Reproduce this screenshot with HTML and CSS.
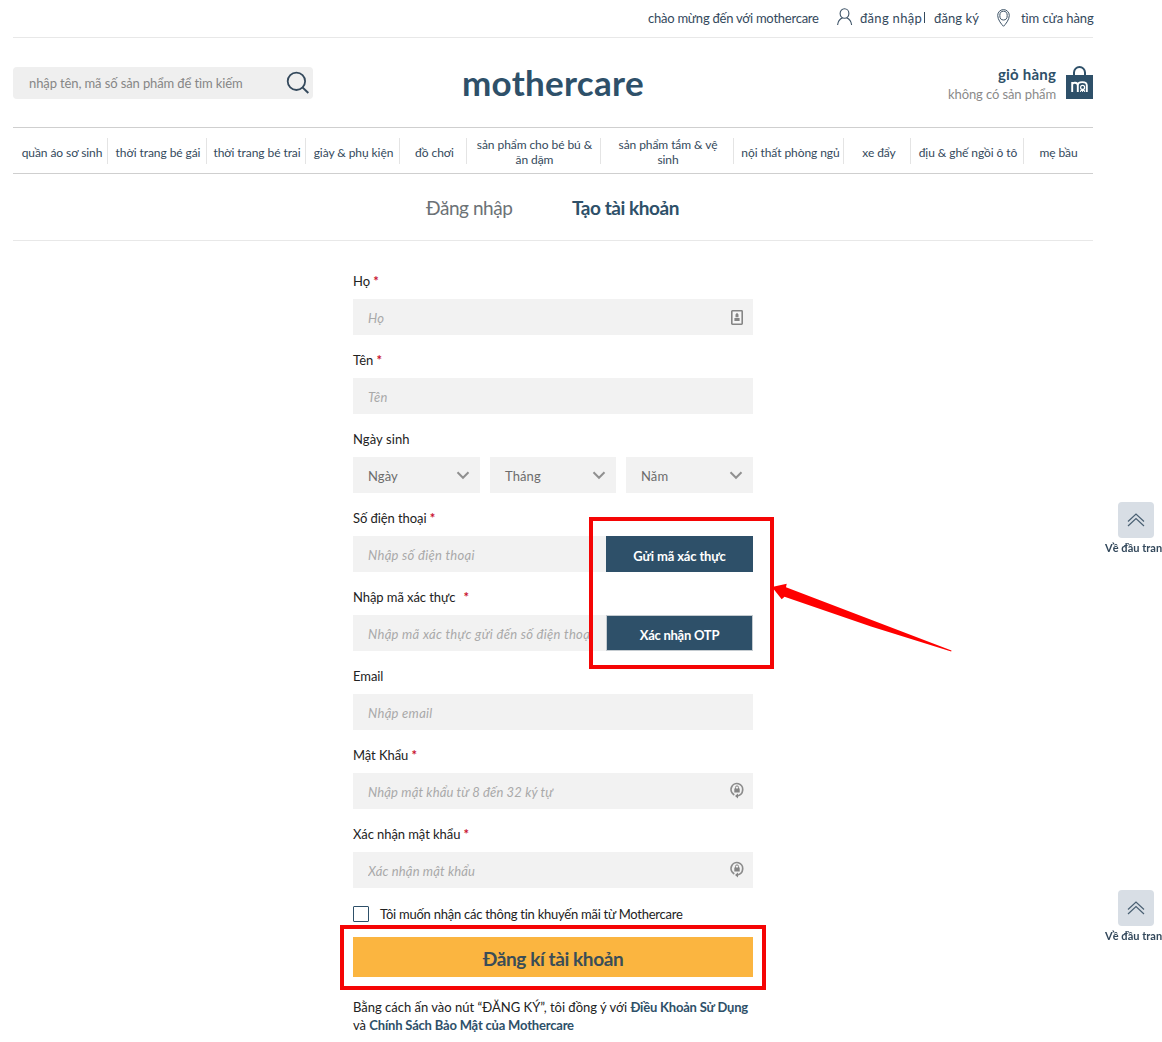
FILE: index.html
```
<!DOCTYPE html>
<html lang="vi">
<head>
    <meta charset="UTF-8">
    <meta name="viewport" content="width=device-width, initial-scale=1.0">
    <title>Tạo tài khoản | mothercare</title>
    <link rel="stylesheet" href="styles.css">
</head>
<body>
    <div class="container">
        <div class="top-bar">
            <span class="welcome">chào mừng đến với mothercare</span>
            <svg class="icon-user" width="16" height="18" viewBox="0 0 16 18" fill="none" stroke="#3c5266" stroke-width="1.1">
                <ellipse cx="7.500" cy="5.500" rx="4.400" ry="4.700"/>
                <path d="M.6 17c.3-3.600 2.200-6 4.900-7.300M14.600 17c-.3-3.600-2.200-6-4.900-7.300"/>
            </svg>
            <a class="login-link" href="#">đăng nhập</a>
            <span class="divider"></span>
            <a class="register-link" href="#">đăng ký</a>
            <svg class="icon-pin" width="13" height="18" viewBox="0 0 13 18" fill="none" stroke="#3c5266">
                <path d="M6.5 17.3C4.600 15.500.7 10.700.7 6.500a5.800 5.900 0 0 1 11.600 0c0 4.200-3.900 9-5.800 10.800z"/>
                <ellipse cx="6.500" cy="6.600" rx="3.700" ry="4.400"/>
            </svg>
            <a class="store-link" href="#">tìm cửa hàng</a>
        </div>

        <header class="header">
            <form class="search">
                <input type="text" placeholder="nhập tên, mã số sản phẩm để tìm kiếm">
                <svg width="24" height="24" viewBox="0 0 24 24" fill="none" stroke="#34495c" stroke-width="1.8">
                    <circle cx="10.400" cy="10.300" r="8.700"/>
                    <path d="M16.500 16.400l5.800 5.600" stroke-width="2"/>
                </svg>
            </form>
            <a class="logo" href="#">mothercare</a>
            <div class="cart">
                <div class="cart-text">
                    <strong>giỏ hàng</strong>
                    <span>không có sản phẩm</span>
                </div>
                <svg width="27" height="33" viewBox="0 0 27 33" fill="none">
                    <path d="M8 10V6.500a5.500 5.500 0 0 1 11 0V10" stroke="#2e5069" stroke-width="2"/>
                    <path d="M0 9h27v24H0z" fill="#2e5069"/>
                    <path d="M6.200 26V16M6.200 19c0-3 5.600-3 5.600.5V26M11.800 19.500c0-4.500 9-4.500 9 0V26" stroke="#fff" stroke-width="1.900"/>
                    <circle cx="16.600" cy="21.400" r="2" stroke="#fff" stroke-width="1.200"/>
                    <path d="M14.600 26v-1.500h4V26M16.600 23.500V26" stroke="#fff"/>
                </svg>
            </div>
        </header>

        <nav class="nav">
            <a class="n1" href="#">quần áo sơ sinh</a>
            <a class="n2" href="#">thời trang bé gái</a>
            <a class="n3" href="#">thời trang bé trai</a>
            <a class="n4" href="#">giày &amp; phụ kiện</a>
            <a class="n5" href="#">đồ chơi</a>
            <a class="n6" href="#">sản phẩm cho bé bú &amp;<br>ăn dặm</a>
            <a class="n7" href="#">sản phẩm tắm &amp; vệ<br>sinh</a>
            <a class="n8" href="#">nội thất phòng ngủ</a>
            <a class="n9" href="#">xe đẩy</a>
            <a class="n10" href="#">địu &amp; ghế ngồi ô tô</a>
            <a class="n11" href="#">mẹ bầu</a>
        </nav>

        <div class="tabs">
            <a class="tab" href="#">Đăng nhập</a>
            <a class="tab active" href="#">Tạo tài khoản</a>
        </div>

        <form class="register">
            <div class="field">
                <label>Họ <i>*</i></label>
                <div class="control">
                    <input type="text" placeholder="Họ">
                    <svg class="field-icon" width="12" height="15" viewBox="0 0 12 15">
                        <rect x=".8" y=".8" width="10.400" height="13.400" rx=".6" fill="#f6f6f6" stroke="#858585" stroke-width="1.600"/>
                        <path d="M6 2.800l1.500 1.700v2.700h-3V4.500zM3.400 8h5.200v3H3.400z" fill="#858585"/>
                    </svg>
                </div>
            </div>
            <div class="field">
                <label>Tên <i>*</i></label>
                <div class="control"><input type="text" placeholder="Tên"></div>
            </div>
            <div class="field">
                <label class="label-dob">Ngày sinh</label>
                <div class="dob">
                    <div class="select">Ngày<svg width="14" height="9" viewBox="0 0 14 9"><path d="M1.500 1.300L7 6.800l5.500-5.500"/></svg></div>
                    <div class="select">Tháng<svg width="14" height="9" viewBox="0 0 14 9"><path d="M1.500 1.300L7 6.800l5.500-5.500"/></svg></div>
                    <div class="select">Năm<svg width="14" height="9" viewBox="0 0 14 9"><path d="M1.500 1.300L7 6.800l5.500-5.500"/></svg></div>
                </div>
            </div>
            <div class="field">
                <label>Số điện thoại <i>*</i></label>
                <div class="control with-button">
                    <input type="text" placeholder="Nhập số điện thoại">
                    <button class="btn-otp" type="button">Gửi mã xác thực</button>
                </div>
            </div>
            <div class="field">
                <label>Nhập mã xác thực <i class="far">*</i></label>
                <div class="control with-button">
                    <input type="text" placeholder="Nhập mã xác thực gửi đến số điện thoại">
                    <button class="btn-otp outlined" type="button">Xác nhận OTP</button>
                </div>
            </div>
            <div class="field">
                <label>Email</label>
                <div class="control"><input type="text" placeholder="Nhập email"></div>
            </div>
            <div class="field">
                <label>Mật Khẩu <i>*</i></label>
                <div class="control">
                    <input class="password" type="password" placeholder="Nhập mật khẩu từ 8 đến 32 ký tự">
                    <svg class="field-icon lock" width="14" height="17" viewBox="0 0 14 17" fill="none">
                        <path d="M4.300 12.900A5.800 6 0 1 1 12.600 8.500C12.400 11 11 13 7.500 14" stroke="#8c8c8c" stroke-width="1.700"/>
                        <path d="M4.300 6.500h5.400v4H4.300z" fill="#858585"/>
                        <path d="M5.500 7V5.400a1.500 1.500 0 0 1 3 0V7" stroke="#858585"/>
                        <path d="M8 11.500v5L5 14z" fill="#858585"/>
                    </svg>
                </div>
            </div>
            <div class="field">
                <label>Xác nhận mật khẩu <i>*</i></label>
                <div class="control">
                    <input class="password" type="password" placeholder="Xác nhận mật khẩu">
                    <svg class="field-icon lock" width="14" height="17" viewBox="0 0 14 17" fill="none">
                        <path d="M4.300 12.900A5.800 6 0 1 1 12.600 8.500C12.400 11 11 13 7.500 14" stroke="#8c8c8c" stroke-width="1.700"/>
                        <path d="M4.300 6.500h5.400v4H4.300z" fill="#858585"/>
                        <path d="M5.500 7V5.400a1.500 1.500 0 0 1 3 0V7" stroke="#858585"/>
                        <path d="M8 11.500v5L5 14z" fill="#858585"/>
                    </svg>
                </div>
            </div>

            <label class="newsletter">
                <span class="checkbox"></span>
                <span>Tôi muốn nhận các thông tin khuyến mãi từ Mothercare</span>
            </label>
            <button class="btn-submit" type="button">Đăng kí tài khoản</button>
            <p class="terms">Bằng cách ấn vào nút “ĐĂNG KÝ”, tôi đồng ý với <a href="#">Điều Khoản Sử Dụng</a><br>và <a href="#">Chính Sách Bảo Mật của Mothercare</a></p>
        </form>
    </div>

    <a class="to-top first" href="#">
        <span class="to-top-box"><svg width="18" height="14" viewBox="0 0 18 14"><path d="M1 8.500L9 1l8 7.500M1 13l8-7.500 8 7.500"/></svg></span>
        <span class="to-top-text">Về đầu trang</span>
    </a>
    <a class="to-top second" href="#">
        <span class="to-top-box"><svg width="18" height="14" viewBox="0 0 18 14"><path d="M1 8.500L9 1l8 7.500M1 13l8-7.500 8 7.500"/></svg></span>
        <span class="to-top-text">Về đầu trang</span>
    </a>

    <!-- red markers over the buttons -->
    <div class="marker marker-otp"></div>
    <div class="marker marker-submit"></div>
    <svg class="arrow" width="182" height="71" viewBox="0 0 182 71">
        <path d="M1 6l14.700-3.300-.7 3.600L180.500 69.600l-.3.800L100 45.500 13.500 15.700l-2.800 2.600z" fill="#f00"/>
    </svg>
</body>
</html>
```

FILE: styles.css
```
:root {
    --navy: #2e5069;
    --text: #34495c;
    --field: #f2f2f2;
    --line: #cfcfcf;
}

* {
    box-sizing: border-box;
    margin: 0;
    padding: 0;
}

body {
    font-family: Lato, "Open Sans", sans-serif;
    font-size: 13px;
    color: var(--text);
    background: #fff;
    height: 1042px;
    overflow: hidden;
}

a {
    color: inherit;
    text-decoration: none;
}

input,
button {
    font-family: inherit;
    border: none;
    outline: none;
}

.container {
    width: 1080px;
    margin-left: 13px;
}

/* top bar */
.top-bar {
    display: flex;
    align-items: center;
    height: 38px;
    padding: 0 0 2px 635px;
    border-bottom: 1px solid #e8e8e8;
    white-space: nowrap;
}

.top-bar > * {
    flex-shrink: 0;
}

.welcome {
    width: 189px;
    letter-spacing: -0.24px;
}

.icon-user {
    margin-bottom: 1px;
}

.login-link {
    width: 63px;
    margin-left: 7px;
    letter-spacing: 0.3px;
}

.divider {
    width: 1px;
    height: 11px;
    margin: 0 9px 0 1px;
    background: var(--text);
}

.register-link {
    width: 63px;
    letter-spacing: 0.1px;
}

.icon-pin {
    margin-right: 11px;
}

.store-link {
    width: 73px;
    letter-spacing: -0.1px;
}

/* header */
.header {
    display: flex;
    align-items: flex-start;
    height: 89px;
    padding-top: 29px;
}

.search {
    display: flex;
    align-items: center;
    width: 300px;
    height: 32px;
    padding: 0 3px 0 16px;
    background: #efefef;
    border-radius: 4px;
}

.search input {
    flex: 1;
    min-width: 0;
    background: none;
    font-size: 13px;
    letter-spacing: -0.11px;
}

.search input::placeholder {
    color: #868686;
}

.logo {
    width: 182px;
    margin-left: 149px;
    color: var(--navy);
    font-size: 35px;
    font-weight: 700;
    letter-spacing: 0.3px;
    line-height: 30px;
}

.cart {
    display: flex;
    margin-left: auto;
    gap: 10px;
    margin-top: -1px;
}

.cart-text {
    display: flex;
    flex-direction: column;
    align-items: flex-end;
    line-height: 19px;
    margin-top: -2px;
}

.cart-text strong {
    color: var(--navy);
    font-size: 15px;
    letter-spacing: 0.2px;
    line-height: 20px;
}

.cart-text span {
    color: #8a8a8a;
    letter-spacing: -0.1px;
    line-height: 21px;
}

/* navigation */
.nav {
    display: flex;
    align-items: center;
    height: 47px;
    border-top: 1px solid var(--line);
    border-bottom: 1px solid var(--line);
}

.nav a {
    display: flex;
    align-items: center;
    justify-content: center;
    height: 26px;
    padding-top: 3px;
    border-right: 1px solid #e4e4e4;
    font-size: 12px;
    letter-spacing: -0.07px;
    line-height: 15px;
    text-align: center;
    white-space: nowrap;
}

.nav .n1 { width: 95px; padding-left: 4px; }
.nav .n2 { width: 99px; padding-left: 2px; }
.nav .n3 { width: 99px; padding-left: 2px; }
.nav .n4 { width: 94px; padding-left: 2px; }
.nav .n5 { width: 67px; padding-left: 3px; }
.nav .n6 { width: 134px; padding-left: 2px; }
.nav .n7 { width: 133px; padding-left: 2px; }
.nav .n8 { width: 110px; padding-left: 4px; }
.nav .n9 { width: 67px; padding-left: 4px; }
.nav .n10 { width: 113px; padding-left: 2px; }
.nav .n11 { width: 69px; border-right: none; }

/* tabs */
.tabs {
    display: flex;
    gap: 60px;
    height: 67px;
    padding-left: 413px;
    border-bottom: 1px solid #e8e8e8;
    line-height: 68px;
}

.tab {
    width: 86px;
    color: #6c7276;
    font-size: 19px;
    letter-spacing: -0.45px;
    white-space: nowrap;
}

.tab.active {
    width: 108px;
    color: var(--navy);
    font-weight: 700;
}

/* register form */
.register {
    width: 400px;
    margin-left: 340px;
    padding-top: 30px;
}

.field {
    height: 79px;
}

.field label {
    display: block;
    height: 28px;
    color: #222;
    font-size: 13px;
    letter-spacing: -0.07px;
    line-height: 20px;
}

.field .label-dob {
    letter-spacing: 0.1px;
}

.field label i {
    color: #c8102e;
    font-style: normal;
    font-weight: 700;
}

.field label .far {
    margin-left: 5px;
}

.control {
    display: flex;
    align-items: center;
    height: 36px;
    padding: 0 0 0 15px;
    background: var(--field);
}

.control input {
    flex: 1;
    min-width: 0;
    height: 36px;
    padding-top: 2px;
    background: none;
    font-size: 13px;
    letter-spacing: 0.3px;
}

.control input.password {
    letter-spacing: 0.14px;
}

.control input::placeholder {
    color: #a9a9a9;
    font-style: italic;
}

.with-button {
    gap: 15px;
}

.field-icon {
    width: 14px;
    margin-right: 9px;
}

.field-icon.lock {
    margin-bottom: 2px;
}

.dob {
    display: grid;
    grid-template-columns: 127px 126px 127px;
    gap: 10px;
}

.select {
    display: flex;
    align-items: center;
    justify-content: space-between;
    height: 36px;
    padding: 2px 10px 0 15px;
    background: var(--field);
    color: #6c6c6c;
    letter-spacing: 0.1px;
}

.select svg {
    margin-bottom: 2px;
    fill: none;
    stroke: #909090;
    stroke-width: 2;
}

.btn-otp {
    width: 147px;
    height: 36px;
    padding-top: 4px;
    background: var(--navy);
    color: #fff;
    font-size: 13px;
    font-weight: 700;
    letter-spacing: -0.15px;
}

.btn-otp.outlined {
    border: 1px solid #c4cbd0;
    letter-spacing: -0.25px;
}

.newsletter {
    display: flex;
    align-items: center;
    gap: 11px;
    height: 16px;
    margin-top: 3px;
    color: #222;
    letter-spacing: -0.25px;
    white-space: nowrap;
}

.checkbox {
    width: 16px;
    height: 16px;
    border: 1px solid var(--navy);
    border-radius: 1px;
}

.btn-submit {
    display: block;
    width: 400px;
    height: 40px;
    margin-top: 15px;
    padding-top: 2px;
    background: #fbb540;
    color: #3a4d57;
    font-size: 19px;
    font-weight: 700;
    letter-spacing: -0.4px;
}

.terms {
    margin-top: 21px;
    color: #222;
    line-height: 18px;
    white-space: nowrap;
}

.terms a {
    color: var(--navy);
    font-weight: 700;
    letter-spacing: -0.19px;
}

/* back to top */
.to-top {
    position: fixed;
    left: 1105px;
    width: 66px;
    white-space: nowrap;
}

.to-top.first { top: 502px; }
.to-top.second { top: 890px; }

.to-top-box {
    display: flex;
    align-items: center;
    justify-content: center;
    width: 36px;
    height: 36px;
    margin-left: 13px;
    background: #d8dee5;
    border-radius: 4px;
}

.to-top svg {
    fill: none;
    stroke: #4a6073;
    stroke-width: 1.2;
}

.to-top-text {
    display: block;
    margin-top: 3px;
    font-size: 11px;
    font-weight: 700;
    line-height: 14px;
}

/* markers */
.marker {
    position: absolute;
    border: 4px solid #f50505;
}

.marker-otp {
    left: 589px;
    top: 517px;
    width: 185px;
    height: 152px;
}

.marker-submit {
    left: 340px;
    top: 925px;
    width: 426px;
    height: 65px;
}

.arrow {
    position: absolute;
    left: 771px;
    top: 581px;
}
```
